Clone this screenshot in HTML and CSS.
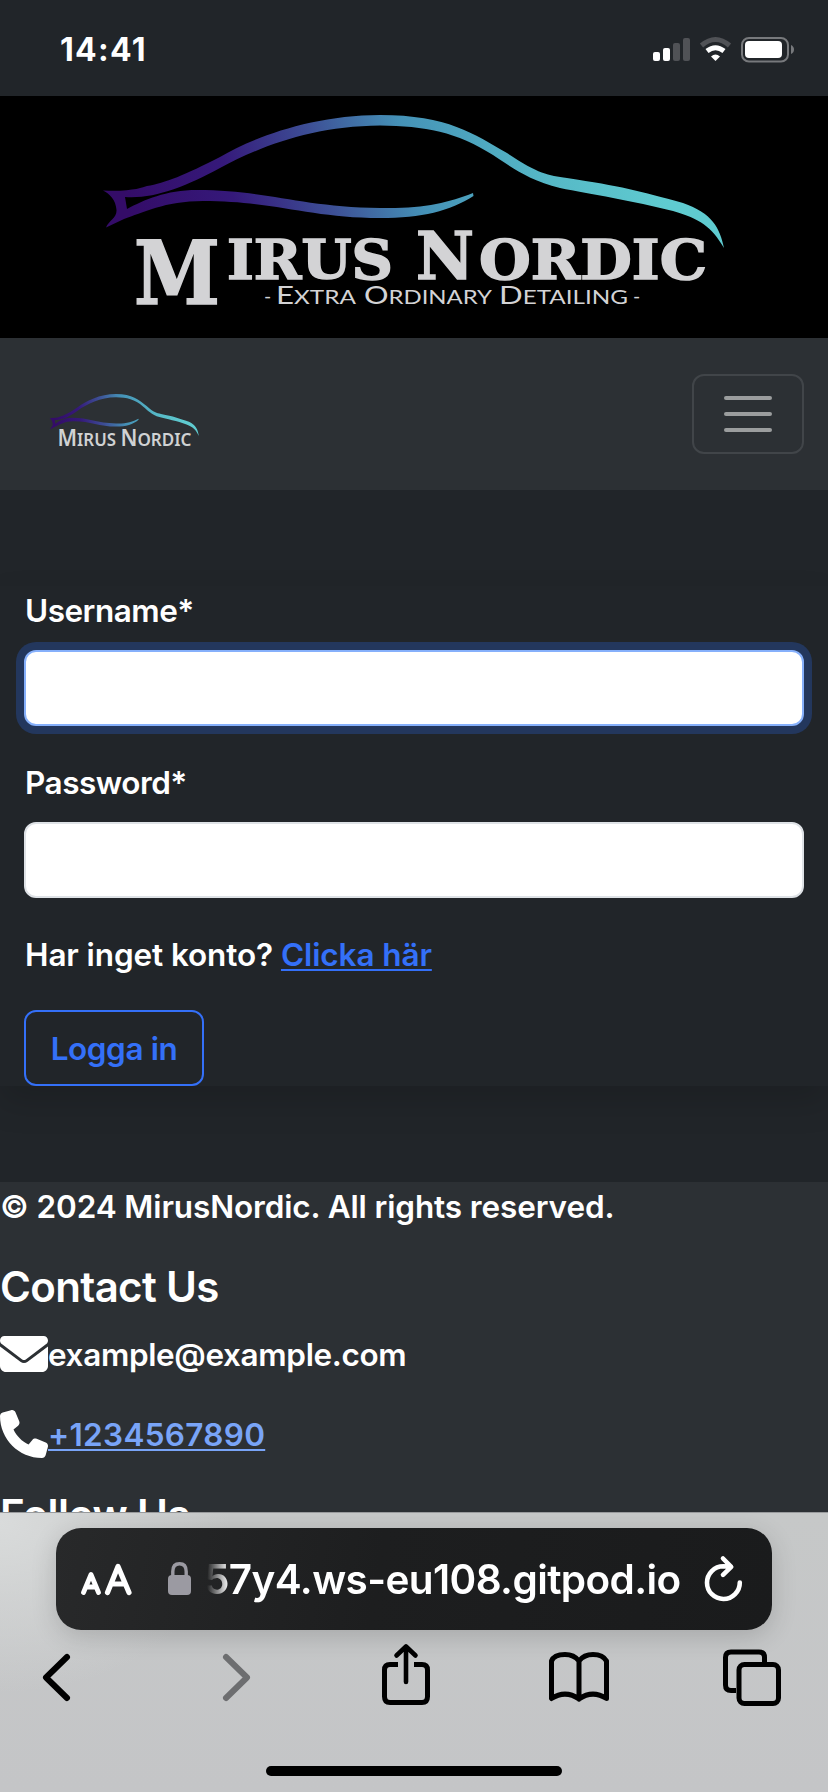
FILE: index.html
```html
<!DOCTYPE html>
<html lang="sv">
<head>
<meta charset="utf-8">
<title>Mirus Nordic</title>
<link rel="stylesheet" href="styles.css">
</head>
<body>
<div class="status">
  <span class="time">14:41</span>
  <svg class="status-icons" width="144" height="28" viewBox="652 36 144 28">
    <g fill="#fff"><rect x="653" y="52" width="7" height="9" rx="2"/><rect x="663" y="48" width="7" height="13" rx="2"/></g>
    <g fill="#505256"><rect x="673" y="43" width="7" height="18" rx="2"/><rect x="683" y="38" width="7" height="23" rx="2"/></g>
    <path d="M701.5 45.5Q715.500 33.500 729.500 45.500" fill="none" stroke="#505256" stroke-width="5"/>
    <path d="M707 51Q715.500 44.500 724 51" fill="none" stroke="#fff" stroke-width="5"/>
    <path d="M711 56.500Q715.500 52.500 720 56.500L715.500 61Z" fill="#fff"/>
    <rect x="742" y="38" width="46" height="23.500" rx="7" fill="none" stroke="#77797c" stroke-width="2"/>
    <rect x="745" y="41" width="37" height="17" rx="4" fill="#fff"/>
    <path d="M791 45Q794 46.500 794 49.500T791 54Z" fill="#77797c"/>
  </svg>
</div>

<main class="page">
  <svg class="banner" width="828" height="242" viewBox="0 96 828 242">
    <defs>
      <linearGradient id="paint" gradientUnits="userSpaceOnUse" x1="140" y1="250" x2="640" y2="110">
        <stop offset="0" stop-color="#340c68"/><stop offset=".2" stop-color="#35197a"/><stop offset=".38" stop-color="#3d5096"/><stop offset=".55" stop-color="#4592b7"/><stop offset=".8" stop-color="#56b9c7"/><stop offset="1" stop-color="#5fcbd0"/>
      </linearGradient>
      <path id="car" fill="url(#paint)" fill-rule="evenodd" d="M103 190.500C130 192 143 187.500 147 186C165 183 185 175 220 157C252 138 312 115 380 115C448 115 474 134 507 153C538 174 548 175 567 178C620 186 640 191 683 203C712 213 720 228 724 248C711 226 700 219 673 211C634 201 590 194 560 188C528 180 510 166 493 155C457 132 425 126 380 125.500C313 126 261 146 220 168C185 187 154 199 125 197L127 209C144 200 166 190 197 190C266 190 300 207 380 208C422 209 448 203 473 193L473.500 196C450 211 422 218 380 218C310 218 275 201 203 201C165 201 142 213 124 219L106 227.500C109 220 117 218 116.500 210C116 200 109 193 103 190.500Z"/>
    </defs>
    <use href="#car"/>
    <g class="wordmark">
      <text x="134" y="303.500" font-size="88.500" textLength="86" lengthAdjust="spacingAndGlyphs">M</text>
      <text x="227" y="278.500" font-size="55" textLength="166" lengthAdjust="spacingAndGlyphs">IRUS</text>
      <text x="416" y="278.500" font-size="66" textLength="58" lengthAdjust="spacingAndGlyphs">N</text>
      <text x="479" y="278.500" font-size="55" textLength="228" lengthAdjust="spacingAndGlyphs">ORDIC</text>
    </g>
    <g class="tagline">
      <text x="264" y="303">-</text>
      <text x="276" y="304" textLength="80" lengthAdjust="spacingAndGlyphs"><tspan class="initial">E</tspan>XTRA</text>
      <text x="364" y="304" textLength="128" lengthAdjust="spacingAndGlyphs"><tspan class="initial">O</tspan>RDINARY</text>
      <text x="499" y="304" textLength="129" lengthAdjust="spacingAndGlyphs"><tspan class="initial">D</tspan>ETAILING</text>
      <text x="633" y="303">-</text>
    </g>
  </svg>

  <nav class="navbar">
    <svg class="brand" width="160" height="64" viewBox="44 388 160 64">
      <use href="#car" transform="matrix(.2405 0 0 .316 24.700 357.700)"/>
      <g class="brand-text">
        <text x="57.500" y="446" textLength="58.500" lengthAdjust="spacingAndGlyphs"><tspan class="brand-initial">M</tspan>IRUS</text>
        <text x="120.500" y="446" textLength="71" lengthAdjust="spacingAndGlyphs"><tspan class="brand-initial">N</tspan>ORDIC</text>
      </g>
    </svg>
    <button class="toggler" aria-label="Menu"><i></i><i></i><i></i></button>
  </nav>

  <form class="login">
    <label>Username*</label>
    <input class="field focused" type="text">
    <label>Password*</label>
    <input class="field" type="password">
    <p class="register"><span>Har inget konto?</span> <a>Clicka här</a></p>
    <button class="submit" type="button">Logga in</button>
  </form>

  <footer class="footer">
    <p class="copy">© 2024 MirusNordic. All rights reserved.</p>
    <h4>Contact Us</h4>
    <div class="contact mail">
      <svg width="48" height="48" viewBox="0 0 512 512" fill="#fff"><path d="M48 64C21.500 64 0 85.500 0 112c0 15.100 7.100 29.300 19.200 38.400L236.800 313.600c11.400 8.500 27 8.500 38.400 0L492.800 150.400c12.100-9.100 19.200-23.300 19.200-38.400c0-26.500-21.500-48-48-48H48zM0 176V384c0 35.300 28.700 64 64 64H448c35.300 0 64-28.700 64-64V176L294.400 339.200c-22.800 17.100-54 17.100-76.800 0L0 176z"/></svg>
      <span>example@example.com</span>
    </div>
    <div class="contact phone">
      <svg width="48" height="48" viewBox="0 0 512 512" fill="#fff"><path d="M164.900 24.600c-7.700-18.600-28-28.500-47.400-23.200l-88 24C12.100 30.200 0 46 0 64C0 311.400 200.600 512 448 512c18 0 33.800-12.100 38.600-29.500l24-88c5.300-19.400-4.600-39.700-23.200-47.400l-96-40c-16.300-6.800-35.200-2.100-46.300 11.600L304.700 368C234.300 334.700 177.300 277.700 144 207.300L193.300 167c13.700-11.200 18.400-30 11.600-46.300l-40-96z"/></svg>
      <a>+1234567890</a>
    </div>
    <h4>Follow Us</h4>
  </footer>
</main>

<div class="browser">
  <div class="address">
    <svg class="aa" width="54" height="36" viewBox="80 1562 54 36"><g fill="none" stroke="#fff" stroke-width="4.800" stroke-linecap="round" stroke-linejoin="round"><path d="M83.500 1592.500L91 1574.500L98.500 1592.500M86.500 1587H95.500"/><path d="M107.500 1592.500L118 1566.500L129 1592.500M111.500 1584H124.500" stroke-width="5.200"/></g></svg>
    <svg class="lock" width="24" height="36" viewBox="168 1561 24 36"><rect x="168" y="1575" width="23" height="20" rx="4" fill="#9b9aa2"/><path d="M172.800 1577V1571.500Q172.800 1563.800 179.500 1563.800T186.200 1571.500V1577" fill="none" stroke="#9b9aa2" stroke-width="3.400"/></svg>
    <span class="url">57y4.ws-eu108.gitpod.io</span>
    <svg class="reload" width="42" height="50" viewBox="703 1552 42 50" fill="none" stroke="#fff" stroke-width="4.600" stroke-linecap="round" stroke-linejoin="round"><path d="M739.800 1580.500A16.400 16.400 0 1 1 723.400 1564.200L731 1564.800M723 1556.500L731.200 1564.800L723 1572.800"/></svg>
  </div>
  <svg class="tools" width="828" height="80" viewBox="0 1638 828 80" fill="none" stroke="#000" stroke-width="5" stroke-linecap="round" stroke-linejoin="round">
    <path d="M67 1657L46 1677.500L67 1698" stroke-width="6"/>
    <path d="M226 1657L247 1677.500L226 1698" stroke="#6d6e70" stroke-width="6"/>
    <path d="M398 1664.500H390Q384.500 1664.500 384.500 1670V1696.500Q384.500 1702.500 390 1702.500H422Q427.500 1702.500 427.500 1696.500V1670Q427.500 1664.500 422 1664.500H414" stroke-linecap="butt"/>
    <path d="M406 1682V1647M396.500 1655.500L406 1646.500L415.500 1655.500" stroke-width="4.600"/>
    <path d="M579 1699Q565.500 1689.500 551.500 1698.500V1661Q554 1654.500 565 1654.500Q574 1654.500 579 1661Q584 1654.500 593 1654.500Q603 1654.500 606.500 1661V1698.500Q592.500 1689.500 579 1699V1661"/>
    <path d="M736 1690.500H731Q725.500 1690.500 725.500 1685V1657.500Q725.500 1652 731 1652H759Q764.500 1652 764.500 1657.500V1664" stroke-linecap="butt"/>
    <rect x="739" y="1664.500" width="39.500" height="39" rx="5.500"/>
  </svg>
  <div class="home"></div>
</div>
</body>
</html>
```
FILE: styles.css
```css
* { box-sizing: border-box; }
body {
  margin: 0;
  width: 828px;
  height: 1792px;
  overflow: hidden;
  display: flex;
  flex-direction: column;
  background: #212529;
  color: #fff;
  font-family: Inter, "Liberation Sans", sans-serif;
  font-size: 31.500px;
  font-weight: 600;
  letter-spacing: -.12px;
  line-height: 48px;
}
svg { display: block; flex: none; letter-spacing: 0; }
p, h4 { margin: 0; font-weight: 600; }
button { font: inherit; letter-spacing: inherit; }

.status {
  height: 96px;
  flex: none;
  display: flex;
  justify-content: space-between;
  align-items: center;
  padding: 4px 32px 0 60px;
}
.time { font-weight: 700; font-size: 32px; letter-spacing: 1.300px; }

.page { height: 1416px; flex: none; overflow: hidden; }
.banner { background: #000; }
.wordmark { font-family: "DejaVu Serif", serif; font-weight: 700; fill: #d3d3d5; stroke: #d3d3d5; stroke-width: 1.600px; }
.tagline { font-family: Lato, sans-serif; font-weight: 400; font-size: 19.500px; fill: #d3d3d5; }
.initial { font-size: 25px; }

.navbar {
  height: 152px;
  background: #2c3034;
  display: flex;
  justify-content: space-between;
  align-items: center;
  padding: 0 24px 0 44px;
}
.brand { margin-top: 12px; }
.brand-text { font-family: "Noto Sans", sans-serif; font-weight: 600; font-size: 18px; fill: #d0d2d3; }
.brand-initial { font-size: 22.500px; }
.toggler {
  width: 112px;
  height: 80px;
  padding: 0;
  border: 2px solid #414549;
  border-radius: 12px;
  background: none;
  display: flex;
  flex-direction: column;
  align-items: center;
  justify-content: center;
  gap: 12px;
}
.toggler i { width: 48px; height: 4px; border-radius: 2px; background: #9b9d9e; }

.login {
  margin-top: 96px;
  padding: 0 24px;
  height: 500px;
  display: flex;
  flex-direction: column;
  align-items: flex-start;
  box-shadow: 0 16px 32px rgba(0, 0, 0, .15);
}
.login label, .register { padding: 1px 0 0 1px; height: 48px; }
.login label { margin: 0 0 16px; letter-spacing: -.5px; }
.field {
  width: 780px;
  height: 76px;
  flex: none;
  border: 2px solid #dee2e6;
  border-radius: 12px;
  background: #fff;
  margin-bottom: 32px;
}
.focused { border-color: #86b0fb; box-shadow: 0 0 0 8px #23375d; }
.register { margin-bottom: 32px; letter-spacing: -.1px; }
a { text-decoration: underline; text-decoration-thickness: 2px; text-underline-offset: 3px; }
.register a { color: #3470f8; }
.submit {
  width: 180px;
  height: 76px;
  flex: none;
  padding: 2px 0 0;
  border: 2px solid #3470f8;
  border-radius: 12px;
  background: none;
  color: #3470f8;
  letter-spacing: -.4px;
}

.footer { margin-top: 96px; height: 400px; background: #2c3034; }
.copy { margin-bottom: 32px; padding-top: 1px; height: 48px; }
h4 { font-size: 42px; line-height: 50px; height: 52px; letter-spacing: -.65px; margin-bottom: 16px; }
.contact { display: flex; align-items: center; height: 48px; margin-bottom: 32px; }
.contact span, .contact a { padding-top: 2px; }
.mail { letter-spacing: -.35px; }
.phone { letter-spacing: .3px; }
.phone a { color: #79a4f7; }

.browser {
  height: 280px;
  flex: none;
  border-top: 1px solid #999b9d;
  padding-top: 15px;
  background: radial-gradient(ellipse 230px 170px at 0 10px, #d9dbdb, rgba(217, 219, 219, 0)), linear-gradient(#c6c8c8, #c4c5c7);
}
.address {
  width: 716px;
  height: 102px;
  margin: 0 0 8px 56px;
  border-radius: 25px;
  background: linear-gradient(100deg, #28292a, #1d1e1f 45%, #1a1b1c);
  box-shadow: 0 6px 26px rgba(0, 0, 0, .16);
  display: flex;
  align-items: center;
  padding-left: 24px;
}
.aa { margin-right: 34px; margin-top: 2px; }
.lock { margin-right: 15px; }
.url {
  width: 480px;
  padding-top: 1px;
  font-size: 40.500px;
  line-height: 60px;
  letter-spacing: -.600px;
  text-indent: -3px;
  white-space: nowrap;
  -webkit-mask-image: linear-gradient(90deg, transparent, #000 22px);
  mask-image: linear-gradient(90deg, transparent, #000 22px);
}
.reload { margin-left: 16px; }
.home { width: 296px; height: 10px; border-radius: 5px; background: #000; margin: 48px 0 0 266px; }
```
